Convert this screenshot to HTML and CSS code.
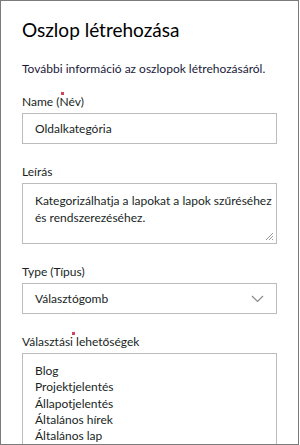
FILE: index.html
```html
<!DOCTYPE html>
<html>
<head>
<meta charset="UTF-8">
<title>Oszlop létrehozása</title>
<link rel="stylesheet" href="styles.css">
</head>
<body>
<div class="panel">
   <h1 class="title">Oszlop létrehozása</h1>
   <p class="info">További információ az oszlopok létrehozásáról.</p>

   <div class="field">
      <label class="lbl">Name (<span class="req">N</span>év)</label>
      <div class="box input">Oldalkategória</div>
   </div>

   <div class="field">
      <label class="lbl">Leírás</label>
      <div class="box area">
         Kategorizálhatja a lapokat a lapok szűréséhez<br>és rendszerezéséhez.
         <svg class="grip" width="9" height="9" viewBox="0 0 9 9">
            <path d="M8 1 L1 8 M8 4 L4 8 M8 7 L7 8" stroke="#9a9a9a" stroke-width="1" fill="none"/>
         </svg>
      </div>
   </div>

   <div class="field">
      <label class="lbl">Type (Típus)</label>
      <div class="box select">
         <span>Választógomb</span>
         <svg class="chev" width="13" height="8" viewBox="0 0 13 8">
            <path d="M1 1 L6.5 6.5 L12 1" stroke="#8a8a8a" stroke-width="1.2" fill="none"/>
         </svg>
      </div>
   </div>

   <div class="field">
      <label class="lbl">Választás<span class="req">i</span> lehetőségek</label>
      <div class="box list">
         <div>Blog</div>
         <div>Projektjelentés</div>
         <div>Állapotjelentés</div>
         <div>Általános hírek</div>
         <div>Általános lap</div>
      </div>
   </div>
</div>
</body>
</html>
```

FILE: styles.css
```css
html, body {
   margin: 0;
   padding: 0;
}

body {
   width: 300px;
   height: 445px;
   overflow: hidden;
   background: #fff;
   font-family: Lato, "Noto Sans", sans-serif;
   color: #201f1e;
}

.panel {
   box-sizing: border-box;
   width: 299px;
   height: 445px;
   border: 1px solid #7b7b7b;
   padding: 17px 21px 0 21px;
   overflow: hidden;
}

.title {
   margin: 0;
   font-size: 19px;
   line-height: 24px;
   font-weight: normal;
   color: #000;
}

.info {
   margin: 19px 0 0 0;
   font-size: 12px;
   line-height: 16px;
   color: #1b1a3a;
}

.field {
   margin-top: 17px;
}

.field + .field {
   margin-top: 20px;
}

.lbl {
   display: block;
   font-size: 12px;
   line-height: 16px;
   margin-bottom: 3px;
   color: #201f1e;
}

.req {
   position: relative;
}

/* small red mark for required fields */
.req::after {
   content: "";
   position: absolute;
   left: 2px;
   top: -2px;
   width: 3px;
   height: 3px;
   background: #d0465a;
}

.box {
   box-sizing: border-box;
   width: 255px;
   border: 1px solid #bcbcbc;
   font-size: 12px;
   color: #201f1e;
   position: relative;
}

.input {
   height: 31px;
   line-height: 29px;
   padding-left: 12px;
}

.area {
   height: 61px;
   padding: 8px 0 0 12px;
   line-height: 17px;
   white-space: nowrap;
}

.grip {
   position: absolute;
   right: 2px;
   bottom: 2px;
}

.select {
   height: 31px;
   display: flex;
   align-items: center;
   justify-content: space-between;
   padding: 0 12px;
}

.list {
   height: 120px;
   padding: 9px 12px 0 12px;
   line-height: 16.3px;
}
```
